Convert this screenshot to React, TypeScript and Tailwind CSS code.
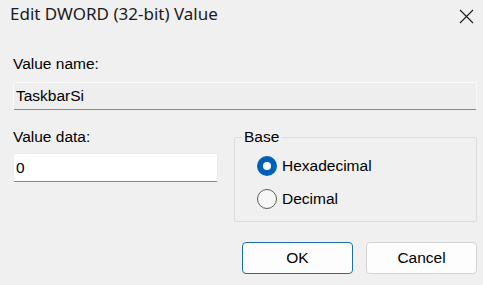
import { useState } from "react";

const sans = "font-['Liberation_Sans',Arial,sans-serif]";

function Radio({
	checked,
	label,
	onSelect,
}: {
	checked: boolean;
	label: string;
	onSelect: () => void;
}) {
	return (
		<label
			className="flex h-[33px] cursor-default items-center pl-[22px]"
			onClick={onSelect}
		>
			{checked ? (
				<span className="flex h-[20px] w-[20px] items-center justify-center rounded-full bg-[#005fb8]">
					<span className="h-[8px] w-[8px] rounded-full bg-white" />
				</span>
			) : (
				<span className="h-[20px] w-[20px] rounded-full border border-[#5d5d5d] bg-[#f7f7f7]" />
			)}
			<span className="ml-[5px] leading-[18px]">{label}</span>
		</label>
	);
}

export default function App() {
	const [base, setBase] = useState<"hex" | "dec">("hex");
	const [data, setData] = useState("0");

	return (
		<div
			className={`flex h-[285px] w-[483px] flex-col bg-[#f0f0f0] text-[15.5px] text-black ${sans}`}
		>
			{/* title bar */}
			<div className="flex h-[50px] items-start justify-between pl-[10px] pr-[9px] pt-[3px]">
				<span className="font-['Noto_Sans',sans-serif] text-[17px] leading-[22px] text-[#1b1b1b]">
					Edit DWORD (32-bit) Value
				</span>
				<svg
					width="15"
					height="15"
					viewBox="0 0 15 15"
					className="mt-[6px]"
					stroke="#1b1b1b"
					strokeWidth="1.1"
				>
					<path d="M1 1L14 14M14 1L1 14" />
				</svg>
			</div>

			<div className="flex flex-col pl-[13px] pr-[6px]">
				<span className="mt-[5px] leading-[18px]">Value name:</span>
				<div className="mt-[9px] flex h-[28px] items-center rounded-[2px] border border-[#f9f9f9] border-b-[#878787] bg-[#eeeeee] px-[2px] leading-[18px]">
					TaskbarSi
				</div>

				<div className="mt-[18px] flex gap-[16px]">
					<div className="flex w-[205px] flex-col">
						<span className="leading-[18px]">Value data:</span>
						<input
							value={data}
							onChange={(e) => setData(e.target.value)}
							className="mt-[7px] h-[29px] rounded-[2px] border border-[#ececec] border-b-[#868686] bg-white px-[2px] leading-[18px] outline-none"
						/>
					</div>

					<fieldset className="w-[243px] rounded-[2px] border border-[#dcdcdc] pb-[6px] pt-[3px]">
						<legend className="ml-[7px] px-[2px] leading-[18px]">Base</legend>
						<Radio
							checked={base === "hex"}
							label="Hexadecimal"
							onSelect={() => setBase("hex")}
						/>
						<Radio
							checked={base === "dec"}
							label="Decimal"
							onSelect={() => setBase("dec")}
						/>
					</fieldset>
				</div>

				<div className="mt-[20px] flex justify-end gap-[13px]">
					<button className="h-[32px] w-[111px] rounded-[4px] border border-[#1c6ea4] bg-[#fdfdfd] leading-[18px]">
						OK
					</button>
					<button className="h-[32px] w-[111px] rounded-[4px] border border-[#d3d3d3] bg-[#fdfdfd] leading-[18px]">
						Cancel
					</button>
				</div>
			</div>
		</div>
	);
}
